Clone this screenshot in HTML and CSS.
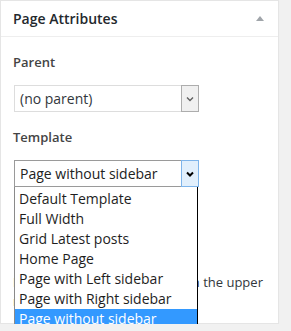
FILE: index.html
```html
<!DOCTYPE html>
<html lang="en">
<head>
  <meta charset="UTF-8">
  <title>Page Attributes</title>
  <link rel="stylesheet" href="styles.css">
</head>
<body>

<!-- Page attributes meta box -->
<div class="postbox">
  <div class="hndle">
    <h2>Page Attributes</h2>
    <span class="toggle"></span>
  </div>

  <div class="inside">
    <p class="field-label">Parent</p>
    <div class="select">
      <span class="select-value">(no parent)</span>
      <span class="select-arrow">
        <svg width="8" height="6" viewBox="0 0 8 6"><polyline points="1,1.5 4,4.5 7,1.5" fill="none" stroke="#606060" stroke-width="1.4"/></svg>
      </span>
    </div>

    <p class="field-label">Template</p>
    <div class="select-wrap">
      <div class="select select-open">
        <span class="select-value">Page without sidebar</span>
        <span class="select-arrow">
          <svg width="8" height="6" viewBox="0 0 8 6"><polyline points="1,1.5 4,4.5 7,1.5" fill="none" stroke="#000" stroke-width="2"/></svg>
        </span>
      </div>

      <!-- open dropdown list, lies over the help text -->
      <ul class="dropdown">
        <li>Default Template</li>
        <li>Full Width</li>
        <li>Grid Latest posts</li>
        <li>Home Page</li>
        <li>Page with Left sidebar</li>
        <li>Page with Right sidebar</li>
        <li class="selected">Page without sidebar</li>
      </ul>
    </div>

    <p class="help">Need help? Use the Help tab in the upper right of your screen.</p>
  </div>
</div>

</body>
</html>
```

FILE: styles.css
```css
body {
  margin: 0;
  background: #f1f1f1;
  font-family: "Open Sans", "Noto Sans", sans-serif;
  color: #32373c;
}

/* Meta box */
.postbox {
  width: 279px;
  box-sizing: border-box;
  background: #fff;
  border: 1px solid #e5e5e5;
  box-shadow: 0 1px 1px rgba(0, 0, 0, 0.04);
}

.hndle {
  display: flex;
  align-items: center;
  justify-content: space-between;
  height: 36px;
  box-sizing: border-box;
  padding: 0 12px;
  border-bottom: 1px solid #eee;
}

.hndle h2 {
  margin: 0;
  font-size: 14px;
  font-weight: 600;
  color: #23282d;
}

.toggle {
  width: 0;
  height: 0;
  margin-right: 2px;
  border-left: 4px solid transparent;
  border-right: 4px solid transparent;
  border-bottom: 5px solid #a0a5aa;
}

.inside {
  padding: 0 12px 12px;
}

.field-label {
  margin: 16px 0 14px;
  font-size: 13px;
  line-height: 18px;
  font-weight: 600;
  color: #444;
}

/* Fake select boxes */
.select {
  display: flex;
  width: 185px;
  height: 27px;
  margin-left: 1px;
  box-sizing: border-box;
  border: 1px solid #ddd;
  font-size: 14px;
}

.select-value {
  flex: 1;
  padding-left: 5px;
  line-height: 25px;
}

.select-arrow {
  display: flex;
  align-items: center;
  justify-content: center;
  width: 18px;
  margin: -1px -1px -1px 0;
  box-sizing: border-box;
  border: 1px solid #adadad;
  background: #f0f0f0;
}

.select-wrap {
  position: relative;
}

.select-open {
  border-color: #9a9a9a;
}

.select-open .select-value {
  color: #222;
}

.select-open .select-arrow {
  border-color: #7eb4ea;
  background: #e1effc;
}

.dropdown {
  position: absolute;
  top: 27px;
  left: 1px;
  z-index: 2;
  width: 184px;
  box-sizing: border-box;
  margin: 0;
  padding: 2px 0 0;
  list-style: none;
  background: #fff;
  border: 1px solid #000;
  border-top: none;
  border-left-color: #8a8a8a;
  font-size: 14px;
  color: #1e1e1e;
}

.dropdown li {
  height: 20px;
  line-height: 20px;
  padding-left: 4px;
  white-space: nowrap;
}

.dropdown li.selected {
  background: #3399ff;
  color: #fff;
}

.help {
  margin: 86px 0 0;
  font-size: 13px;
  line-height: 19px;
}
```
